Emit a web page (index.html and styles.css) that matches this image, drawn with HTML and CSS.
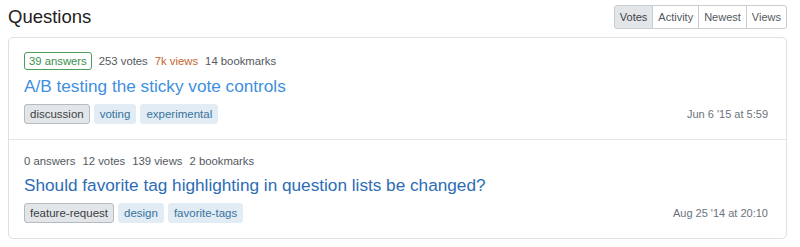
FILE: index.html
```html
<!DOCTYPE html>
<html lang="en">
<head>
    <meta charset="UTF-8">
    <title>Questions</title>
    <link rel="stylesheet" href="styles.css">
</head>
<body>

<div class="page">
    <div class="page-header">
        <h1>Questions</h1>
        <div class="sort-tabs">
            <button class="active">Votes</button>
            <button>Activity</button>
            <button>Newest</button>
            <button>Views</button>
        </div>
    </div>

    <div class="question-list">
        <div class="question">
            <div class="stats">
                <span class="answered">39 answers</span>
                <span>253 votes</span>
                <span class="hot">7k views</span>
                <span>14 bookmarks</span>
            </div>
            <a class="title" href="#">A/B testing the sticky vote controls</a>
            <div class="question-footer">
                <div class="tags">
                    <span class="tag required">discussion</span>
                    <span class="tag">voting</span>
                    <span class="tag">experimental</span>
                </div>
                <span class="date">Jun 6 '15 at 5:59</span>
            </div>
        </div>

        <div class="question">
            <div class="stats">
                <span>0 answers</span>
                <span>12 votes</span>
                <span>139 views</span>
                <span>2 bookmarks</span>
            </div>
            <a class="title visited" href="#">Should favorite tag highlighting in question lists be changed?</a>
            <div class="question-footer">
                <div class="tags">
                    <span class="tag required">feature-request</span>
                    <span class="tag">design</span>
                    <span class="tag">favorite-tags</span>
                </div>
                <span class="date">Aug 25 '14 at 20:10</span>
            </div>
        </div>
    </div>
</div>

</body>
</html>
```

FILE: styles.css
```css
body {
    font-family: 'Liberation Sans', Arial, sans-serif;
    margin: 0;
    padding: 5px 13px 0 8px;
    background-color: #ffffff;
    color: #232629;
}
.page-header {
    display: flex;
    justify-content: space-between;
    align-items: center;
    height: 24px;
    margin-bottom: 8px;
}
.page-header h1 {
    margin: 0;
    font-size: 18.5px;
    font-weight: normal;
    color: #1f2123;
}
.sort-tabs {
    display: flex;
}
.sort-tabs button {
    font-family: inherit;
    font-size: 11px;
    color: #525960;
    background-color: #ffffff;
    border: 1px solid #c9ced3;
    margin-left: -1px;
    padding: 0 5px;
    height: 24px;
    cursor: pointer;
}
.sort-tabs button:first-child {
    border-radius: 3px 0 0 3px;
}
.sort-tabs button:last-child {
    border-radius: 0 3px 3px 0;
}
.sort-tabs button.active {
    background-color: #e3e6e8;
    color: #3b4045;
}
.question-list {
    border: 1px solid #dee1e4;
    border-radius: 5px;
}
.question {
    padding: 14px 18px 15px 15px;
    border-bottom: 1px solid #e3e6e8;
}
.question:last-child {
    border-bottom: none;
}
.stats {
    display: flex;
    align-items: center;
    gap: 7px;
    font-size: 11.3px;
    line-height: 15px;
    color: #525960;
}
.stats .answered {
    border: 1px solid #4a9e5c;
    border-radius: 3px;
    color: #3a8d4c;
    padding: 0 4px;
    line-height: 16px;
}
.stats .hot {
    color: #c2662b;
}
.title {
    display: block;
    margin-top: 5px;
    font-size: 17.2px;
    line-height: 22px;
    color: #3d8fe0;
    text-decoration: none;
}
.title.visited {
    color: #2d6cb5;
}
.question-footer {
    display: flex;
    justify-content: space-between;
    align-items: center;
    margin-top: 7px;
}
.tags {
    display: flex;
    gap: 4px;
}
.tag {
    font-size: 11.5px;
    color: #39739d;
    background-color: #e1ecf4;
    border: 1px solid #e1ecf4;
    border-radius: 3px;
    padding: 0 5px;
    line-height: 18px;
}
.tag.required {
    background-color: #e3e6e8;
    border-color: #b6bbbf;
    color: #3b4045;
}
.date {
    font-size: 11px;
    color: #6a737c;
}
```
